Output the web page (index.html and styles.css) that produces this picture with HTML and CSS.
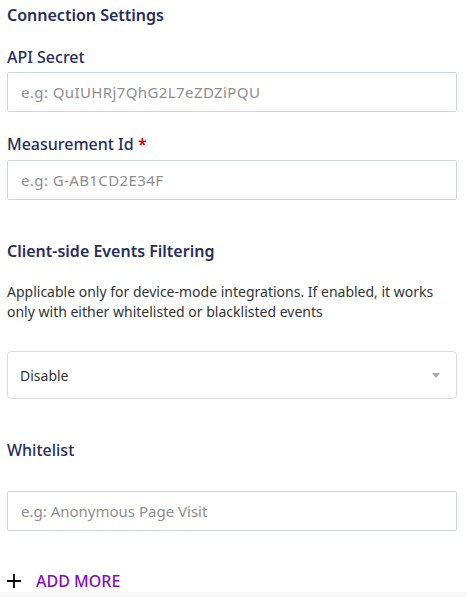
FILE: index.html
```html
<!DOCTYPE html>
<html>
<head>
<meta charset="utf-8">
<link rel="stylesheet" href="styles.css">
</head>
<body>
<div class="page">
  <h2 class="section-title">Connection Settings</h2>
  <label class="field-label first">API Secret</label>
  <div class="text-input"><span class="placeholder code">e.g: QuIUHRj7QhG2L7eZDZiPQU</span></div>
  <label class="field-label">Measurement Id <span class="req">*</span></label>
  <div class="text-input"><span class="placeholder code">e.g: G-AB1CD2E34F</span></div>
  <h2 class="section-title filter">Client-side Events Filtering</h2>
  <p class="desc">Applicable only for device-mode integrations. If enabled, it works only with either whitelisted or blacklisted events</p>
  <div class="select">
    <span class="select-value">Disable</span>
    <span class="caret"></span>
  </div>
  <label class="field-label list">Whitelist</label>
  <div class="text-input list-input"><span class="placeholder">e.g: Anonymous Page Visit</span></div>
  <div class="add-more">
    <svg class="plus" width="14" height="14" viewBox="0 0 14 14"><path d="M7 0V14M0 7H14" stroke="#000" stroke-width="1.8"/></svg>
    <span>ADD MORE</span>
  </div>
</div>
<div class="footer"></div>
</body>
</html>
```
FILE: styles.css
```css
html, body {
  margin: 0;
  padding: 0;
  background: #fff;
  height: 597px;
  overflow: hidden;
}
body {
  font-family: "Noto Sans", sans-serif;
}
.page {
  padding: 3px 10px 0 7px;
  display: flex;
  flex-direction: column;
}
.section-title {
  margin: 0;
  font-size: 16px;
  line-height: 24px;
  font-weight: 600;
  color: #272d5e;
}
.section-title.filter {
  margin-top: 39px;
}
.field-label {
  display: block;
  font-size: 16px;
  line-height: 24px;
  font-weight: 500;
  color: #272d5e;
  margin-top: 20px;
  margin-bottom: 4px;
}
.field-label.first {
  margin-top: 18px;
  margin-bottom: 3px;
}
.req {
  color: #e00000;
  font-weight: 600;
}
.text-input {
  box-sizing: border-box;
  height: 40px;
  border: 1px solid #cfd6dc;
  border-radius: 2px;
  display: flex;
  align-items: center;
  padding-left: 13px;
}
.placeholder {
  font-size: 15px;
  color: #8e8e8e;
}
.placeholder.code {
  letter-spacing: 0.4px;
}
.desc {
  margin: 19px 0 0;
  font-size: 14px;
  line-height: 20px;
  color: #333;
}
.select {
  margin-top: 29px;
  box-sizing: border-box;
  height: 48px;
  border: 1px solid #dcdcdc;
  border-radius: 4px;
  display: flex;
  align-items: center;
  justify-content: space-between;
  padding: 0 16px 0 12px;
}
.select-value {
  font-size: 14px;
  color: #333;
}
.caret {
  width: 0;
  height: 0;
  border-left: 4px solid transparent;
  border-right: 4px solid transparent;
  border-top: 5px solid #aaa;
}
.field-label.list {
  margin-top: 39px;
  margin-bottom: 29px;
}
.add-more {
  margin-top: 39px;
  display: flex;
  align-items: center;
  gap: 15px;
  height: 22px;
  color: #8a08c4;
  font-size: 16px;
  font-weight: 500;
}
.footer {
  height: 10px;
  background: #f7f7f7;
}
```
